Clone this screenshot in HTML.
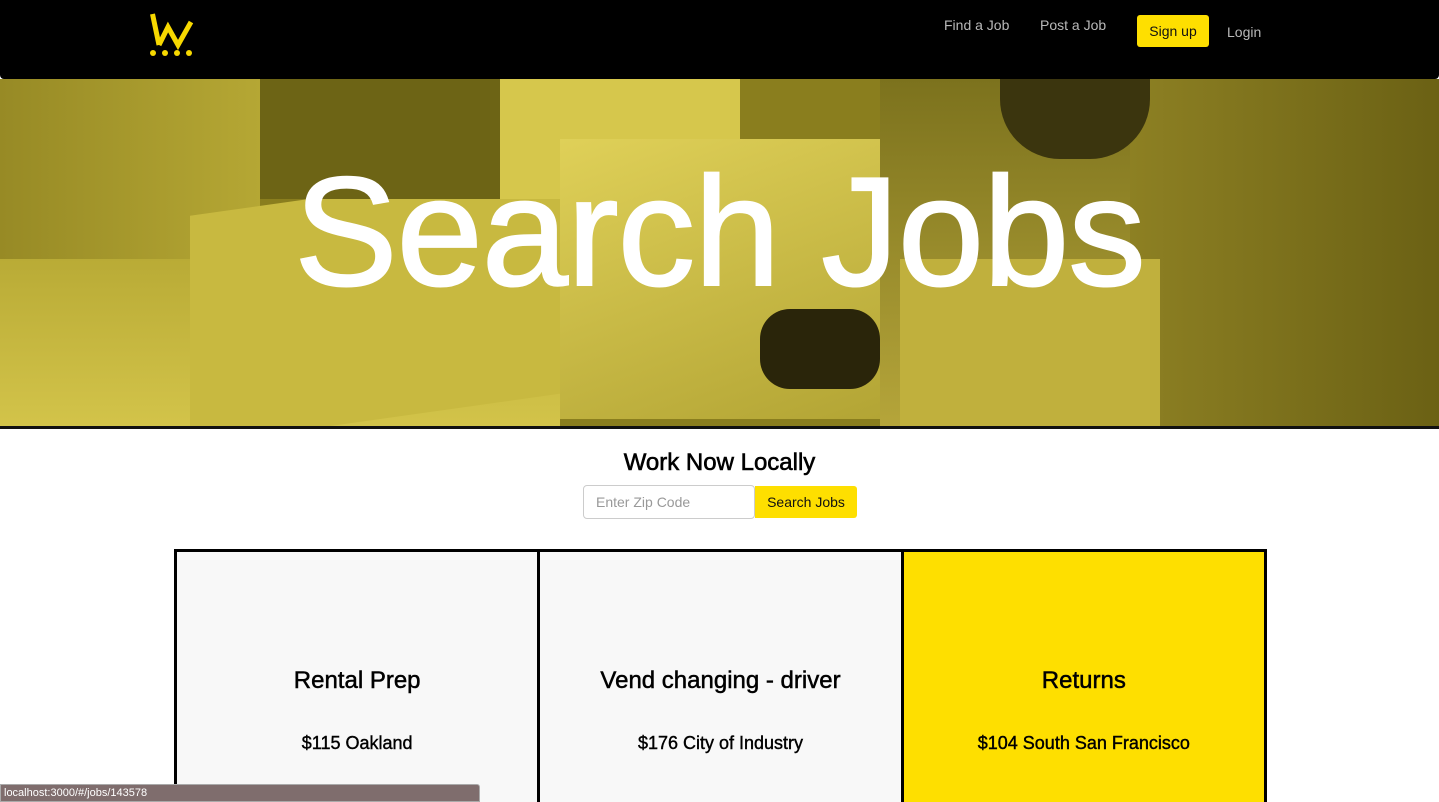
<!DOCTYPE html>
<html><head><meta charset="utf-8"><style>
*{margin:0;padding:0;box-sizing:border-box}
html,body{width:1439px;height:802px;overflow:hidden}
body{background:#fff;font-family:"Liberation Sans",Arial,sans-serif;position:relative}
.hdr{position:absolute;left:0;top:0;width:1439px;height:79px;background:#000;border-radius:0 0 4px 4px;z-index:3}
.nav{position:absolute;color:#b9b9b9;font-size:14px}
.hero{position:absolute;left:0;top:79px;width:1439px;height:347px;overflow:hidden;background:#8a7e1e}
.hero div{position:absolute}
.line{position:absolute;left:0;top:426px;width:1439px;height:3px;background:#111}
.title{position:absolute;left:0;width:1439px;top:152px;text-align:center;color:#fff;font-size:155px;line-height:160px;letter-spacing:-1px;z-index:2;-webkit-text-stroke:2px #fff}
.cards{position:absolute;left:174px;top:549px;width:1093px;height:270px;border:3px solid #000;display:flex;background:#000}
.card{width:363px;height:100%;background:#f8f8f8;text-align:center}
.card+.card{margin-left:3px}
.card h3{font-weight:normal;font-size:24px;margin-top:115px;color:#000;-webkit-text-stroke:0.5px #000}
.card p{font-size:18px;margin-top:38px;color:#000;-webkit-text-stroke:0.4px #000}
</style></head><body>
<div class="hdr">
<svg style="position:absolute;left:146px;top:12px" width="52" height="50" viewBox="146 12 52 50">
<g fill="none" stroke="#f7d800" stroke-width="5" stroke-linejoin="miter">
<line x1="152.5" y1="14" x2="159" y2="45"/>
<polyline points="159,45 168,27 178,45 191,22"/></g>
<g fill="#f7d800"><circle cx="153" cy="53" r="3"/><circle cx="165" cy="53" r="3"/><circle cx="177" cy="53" r="3"/><circle cx="189" cy="53" r="3"/></g></svg>
<div class="nav" style="left:944px;top:17px">Find a Job</div>
<div class="nav" style="left:1040px;top:17px">Post a Job</div>
<div style="position:absolute;left:1137px;top:15px;width:72px;height:32px;background:#fedf00;border-radius:3px;color:#111;font-size:14px;line-height:32px;text-align:center">Sign up</div>
<div class="nav" style="left:1227px;top:24px">Login</div>
</div>
<div class="hero">
<div style="left:0;top:0;width:260px;height:347px;background:linear-gradient(90deg,#978a25,#b5a734)"></div>
<div style="left:0;top:180px;width:560px;height:170px;background:linear-gradient(180deg,#b9ab36,#d3c44a)"></div>
<div style="left:190px;top:110px;width:380px;height:230px;background:#c8b940;transform:skewY(-8deg)"></div>
<div style="left:500px;top:0;width:240px;height:120px;background:#d6c74c"></div>
<div style="left:260px;top:0;width:240px;height:120px;background:#6d6415"></div>
<div style="left:560px;top:60px;width:340px;height:280px;background:linear-gradient(160deg,#dfd058,#b2a434)"></div>
<div style="left:880px;top:0;width:300px;height:347px;background:linear-gradient(180deg,#7c721d,#b5a53a)"></div>
<div style="left:1130px;top:0;width:309px;height:347px;background:linear-gradient(90deg,#8d8023,#6b6114)"></div>
<div style="left:900px;top:180px;width:260px;height:167px;background:#c0b03d"></div>
<div style="left:760px;top:230px;width:120px;height:80px;background:#2a250a;border-radius:30px"></div>
<div style="left:1000px;top:0;width:150px;height:80px;background:#3b350e;border-radius:0 0 60px 60px"></div>
</div>
<div class="title">Search Jobs</div>
<div class="line"></div>
<div style="position:absolute;left:0;width:1439px;top:449px;text-align:center;font-size:24px;color:#000;-webkit-text-stroke:0.6px #000">Work Now Locally</div>
<div style="position:absolute;left:583px;top:485px;width:172px;height:34px;border:1px solid #ccc;border-radius:4px;color:#999;font-size:14px;line-height:32px;padding-left:12px">Enter Zip Code</div>
<div style="position:absolute;left:755px;top:486px;width:102px;height:32px;background:#fedf00;border-radius:0 3px 3px 0;font-size:14px;line-height:32px;text-align:center;color:#111">Search Jobs</div>
<div class="cards">
<div class="card"><h3>Rental Prep</h3><p>$115 Oakland</p></div>
<div class="card"><h3>Vend changing - driver</h3><p>$176 City of Industry</p></div>
<div class="card" style="background:#fedf00"><h3>Returns</h3><p>$104 South San Francisco</p></div>
</div>
<div style="position:absolute;left:0;top:784px;width:480px;height:18px;background:#7f6d6d;border:1px solid #aaa;border-radius:0 3px 0 0;color:#fff;font-size:11px;line-height:16px;padding-left:3px">localhost:3000/#/jobs/143578</div>
</body></html>
